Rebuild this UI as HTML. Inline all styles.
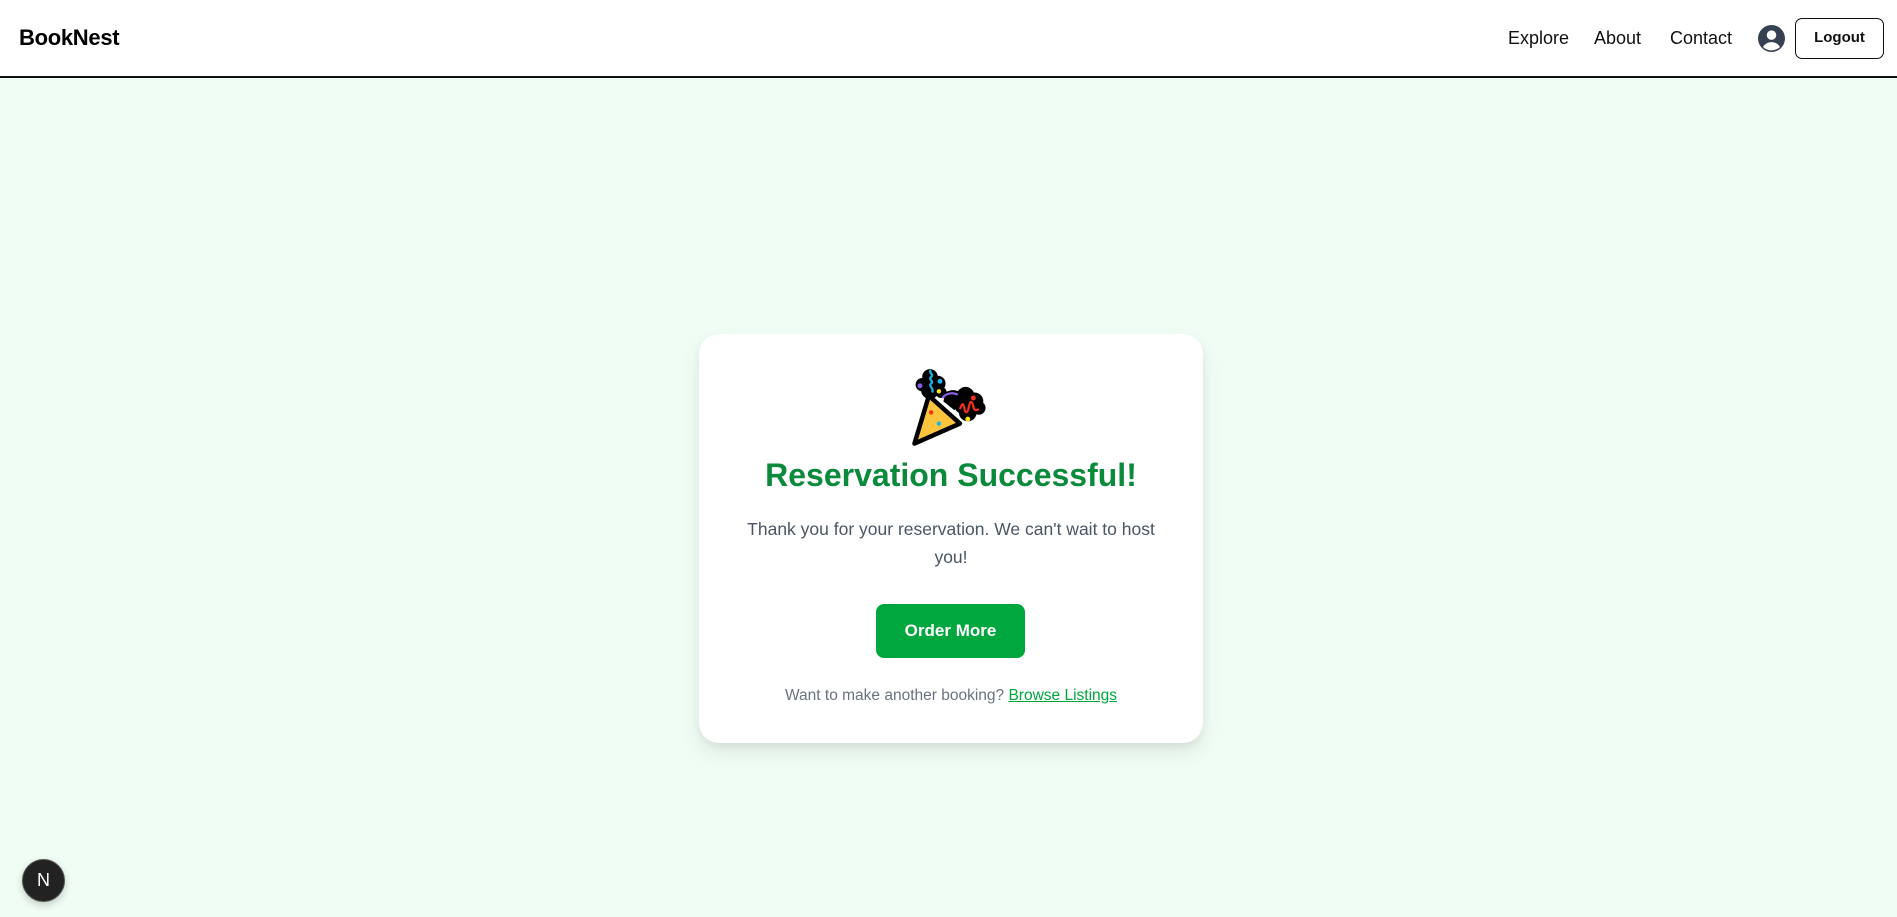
<!DOCTYPE html>
<html><head><meta charset="utf-8"><style>
*{margin:0;padding:0;box-sizing:border-box}
body{width:1897px;height:917px;background:#f0fdf4;font-family:"Liberation Sans",sans-serif;position:relative;overflow:hidden}
.hdr{position:absolute;left:0;top:0;width:1897px;height:78px;background:#fff;border-bottom:2px solid #111}
.logo{position:absolute;left:19px;top:25px;font-size:22px;font-weight:bold;color:#000;letter-spacing:-0.3px}
.nav{position:absolute;top:28px;font-size:18px;color:#111}
.btn-out{position:absolute;left:1795px;top:18px;width:89px;height:41px;border:1.5px solid #111;border-radius:7px;font-size:15px;font-weight:bold;text-align:center;line-height:38px;color:#111}
.card{position:absolute;left:699px;top:334px;width:504px;height:409px;background:#fff;border-radius:20px;box-shadow:0 10px 20px rgba(0,0,0,0.08),0 4px 8px rgba(0,0,0,0.05)}
.title{position:absolute;left:699px;width:504px;top:457px;text-align:center;font-size:32px;font-weight:bold;color:#0b8a3b}
.p{position:absolute;left:731px;width:440px;top:515px;text-align:center;font-size:17.5px;line-height:28px;color:#4a5565}
.obtn{position:absolute;left:876px;top:604px;width:149px;height:54px;background:#00a63e;border-radius:8px;color:#fff;font-size:17px;font-weight:bold;text-align:center;line-height:54px}
.foot{position:absolute;left:699px;width:504px;top:687px;text-align:center;font-size:15.5px;color:#6a7282}
.foot span{color:#00a63e;text-decoration:underline}
.nb{position:absolute;left:22px;top:859px;width:43px;height:43px;border-radius:50%;background:#222;border:1.5px solid #555;color:#fff;font-size:18px;text-align:center;line-height:40px;box-shadow:0 3px 8px rgba(0,0,0,0.2)}
</style></head><body>
<div class="hdr">
<div class="logo">BookNest</div>
<div class="nav" style="left:1508px">Explore</div>
<div class="nav" style="left:1594px">About</div>
<div class="nav" style="left:1670px">Contact</div>
<svg style="position:absolute;left:1758px;top:25px" width="27" height="27" viewBox="0 0 24 24"><circle cx="12" cy="12" r="12" fill="#364152"/><circle cx="12" cy="9" r="4.2" fill="#fff"/><path d="M4.5 19.5c1.8-3 4.5-4.3 7.5-4.3s5.7 1.3 7.5 4.3c-2 2-4.6 3-7.5 3s-5.5-1-7.5-3z" fill="#fff"/></svg>
<div class="btn-out">Logout</div>
</div>
<div class="card"></div>
<svg style="position:absolute;left:910px;top:368px" width="80" height="80" viewBox="0 0 72 72">
<g fill="#000">
<circle cx="18" cy="8" r="7"/><circle cx="11" cy="15" r="6"/><circle cx="25" cy="14" r="7"/><circle cx="18" cy="20" r="8"/><circle cx="28" cy="22" r="5"/>
<circle cx="50" cy="25" r="8"/><circle cx="58" cy="30" r="8"/><circle cx="62" cy="36" r="6"/><circle cx="52" cy="40" r="8"/><circle cx="47" cy="34" r="7"/>
<path d="M32 22 C38 18 46 20 48 26 L40 38 L30 30Z"/>
</g>
<path d="M17 25 L45 50 L4 68 Z" fill="#fcc43d" stroke="#000" stroke-width="4" stroke-linejoin="round"/>
<path d="M19 2 c-3 2 3 4 0 6 c-3 2 3 4 0 6 c-3 2 3 4 1 8" fill="none" stroke="#1cb5e8" stroke-width="2"/>
<path d="M29 27 C33 22 39 22 43 24" fill="none" stroke="#8a5ee6" stroke-width="2"/>
<path d="M45 37 c2-6 3-6 4 0 c1 4 3 4 4-2 c1-6 3-6 4 0 c1 4 3 3 5 2" fill="none" stroke="#f0321c" stroke-width="2"/>
<circle cx="9" cy="16" r="2.2" fill="#8a5ee6"/><circle cx="27" cy="12" r="2.2" fill="#1cb5e8"/><circle cx="26" cy="21" r="2" fill="#fce20e"/>
<circle cx="57" cy="27" r="2.2" fill="#f0321c"/><circle cx="52" cy="46" r="2.2" fill="#fce20e"/>
<circle cx="19" cy="40" r="2" fill="#f0321c"/><circle cx="26" cy="50" r="2" fill="#1cb5e8"/>
</svg>
<div class="title">Reservation Successful!</div>
<div class="p">Thank you for your reservation. We can't wait to host you!</div>
<div class="obtn">Order More</div>
<div class="foot">Want to make another booking? <span>Browse Listings</span></div>
<div class="nb">N</div>
</body></html>
